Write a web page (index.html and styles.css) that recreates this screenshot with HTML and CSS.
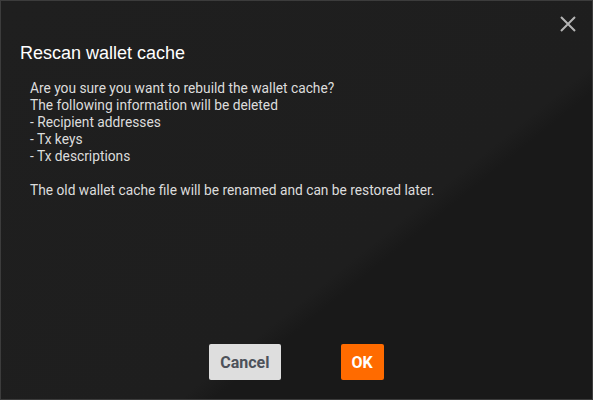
FILE: index.html
```html
<!DOCTYPE html>
<html lang="en">
<head>
<meta charset="utf-8">
<title>Rescan wallet cache</title>
<link rel="stylesheet" href="styles.css">
</head>
<body>
<div class="dialog">
  <button class="close" aria-label="Close">
    <svg width="16" height="16" viewBox="0 0 16 16"><path d="M1 1 L15 15 M15 1 L1 15" stroke="#b4b4b4" stroke-width="2" fill="none"/></svg>
  </button>
  <h1 class="title">Rescan wallet cache</h1>
  <div class="message">
    <p>Are you sure you want to rebuild the wallet cache?<br>The following information will be deleted<br>- Recipient addresses<br>- Tx keys<br>- Tx descriptions</p>
    <p>The old wallet cache file will be renamed and can be restored later.</p>
  </div>
  <div class="actions">
    <button class="btn btn-cancel">Cancel</button>
    <button class="btn btn-ok">OK</button>
  </div>
</div>
</body>
</html>
```

FILE: styles.css
```css
html, body {
  margin: 0;
  padding: 0;
  background: #1c1c1c;
}
.dialog {
  position: relative;
  box-sizing: border-box;
  width: 593px;
  height: 400px;
  border: 1px solid #3c3c3c;
  background: linear-gradient(141deg, #1f1f1f 0%, #1e1e1e 62%, #191919 65%, #191919 100%);
  display: flex;
  flex-direction: column;
}
.close {
  position: absolute;
  top: 15px;
  right: 16px;
  width: 16px;
  height: 16px;
  padding: 0;
  border: 0;
  background: none;
  display: block;
}
.close svg { display: block; }
.title {
  margin: 42px 0 0 19px;
  font-family: "Liberation Sans", Arial, sans-serif;
  font-weight: normal;
  font-size: 18px;
  line-height: 20px;
  color: #ffffff;
}
.message {
  flex: 1;
  margin: 17px 0 0 29px;
  font-family: Roboto, "Liberation Sans", sans-serif;
  font-size: 13.75px;
  line-height: 17px;
  color: #dcdcdc;
}
.message p {
  margin: 0 0 17px 0;
}
.actions {
  display: flex;
  justify-content: center;
  gap: 60px;
  margin-bottom: 19px;
}
.btn {
  height: 36px;
  border: 0;
  border-radius: 2px;
  padding: 0 11px;
  font-family: Roboto, "Liberation Sans", sans-serif;
  font-weight: bold;
  font-size: 16px;
}
.btn-cancel {
  background: #dedede;
  color: #4d525a;
}
.btn-ok {
  background: #ff6b00;
  color: #ffffff;
}
```
